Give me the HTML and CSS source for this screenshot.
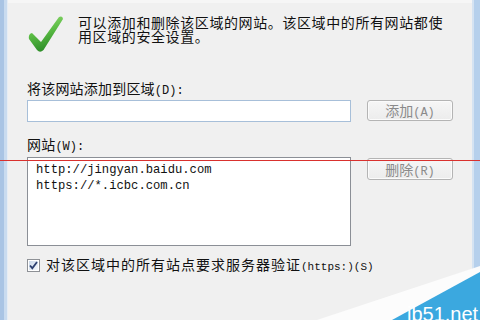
FILE: index.html
```html
<!DOCTYPE html>
<html lang="zh-CN">
<head>
<meta charset="utf-8">
<title>站点</title>
<link rel="stylesheet" href="styles.css">
</head>
<body>
<div class="window">
  <div class="frame frame-left"></div>
  <div class="dialog">
    <div class="intro">
      <svg class="check-icon" viewBox="0 0 36 36" aria-hidden="true">
        <defs>
          <linearGradient id="cg" x1="0" y1="0" x2="0.3" y2="1">
            <stop offset="0" stop-color="#9ade78"/>
            <stop offset="0.5" stop-color="#5cbd45"/>
            <stop offset="1" stop-color="#2f8f2a"/>
          </linearGradient>
        </defs>
        <path d="M4,17 L13,26 L31,1 Q34.5,-0.5 35,3 L15.5,34 Q12,37.5 9,34 L1,23 Q0,18 4,17 Z" fill="url(#cg)"/>
      </svg>
      <p class="intro-text">可以添加和删除该区域的网站。该区域中的所有网站都使<br>用区域的安全设置。</p>
    </div>
    <label class="field-label" for="site">将该网站添加到区域<span class="en">(D):</span></label>
    <div class="row">
      <input class="textbox" id="site" type="text">
      <button class="btn" disabled>添加<span class="en">(A)</span></button>
    </div>
    <div class="field-label list-label">网站<span class="en">(W):</span></div>
    <div class="row list-row">
      <ul class="listbox">
        <li>http://jingyan.baidu.com</li>
        <li>https://*.icbc.com.cn</li>
      </ul>
      <button class="btn btn-remove" disabled>删除<span class="en">(R)</span></button>
    </div>
    <label class="check-row">
      <svg class="checkbox" viewBox="0 0 13 13" aria-hidden="true">
        <defs>
          <linearGradient id="bg" x1="0" y1="0" x2="1" y2="1">
            <stop offset="0" stop-color="#c9d8ea"/>
            <stop offset="1" stop-color="#f4f8fc"/>
          </linearGradient>
        </defs>
        <rect x="0.5" y="0.5" width="12" height="12" fill="#fff" stroke="#8e9196"/>
        <rect x="2" y="2" width="9" height="9" fill="url(#bg)"/>
        <path d="M3,6.5 L5.3,9.2 L10,3" fill="none" stroke="#2b3f70" stroke-width="1.8"/>
      </svg>
      <span>对该区域中的所有站点要求服务器验证<span class="en">(https:)(S)</span></span>
    </label>
  </div>
  <div class="frame frame-right"></div>
  <div class="red-line"></div>
  <div class="watermark">
    <svg class="wm-shape" viewBox="0 0 165 55" aria-hidden="true">
      <polygon points="2,55 165,1 165,55" fill="#fcfcfc"/>
      <polygon points="77,55 165,7 165,55" fill="#3ba8df"/>
    </svg>
    <span class="wm-text">jb51.net</span>
  </div>
</div>
</body>
</html>
```

FILE: styles.css
```css
html, body {
  margin: 0;
  padding: 0;
}

body {
  font-family: "Noto Sans CJK SC", sans-serif;
  color: #111;
}

.window {
  position: relative;
  width: 480px;
  height: 320px;
  display: flex;
  background: #f0f0f0;
  overflow: hidden;
}

.frame {
  flex: none;
  width: 8px;
}

.frame-left {
  background: linear-gradient(to right, #a9c4e4 0 4px, #c9dbef 4px 7px, #e6edf5 7px 8px);
}

.frame-right {
  background: linear-gradient(to right, #d5e3f2 0 2px, #b6d0ec 2px 8px);
}

.dialog {
  flex: 1;
  box-sizing: border-box;
  border-top: 3px solid #f6f6f6;
  padding: 13px 0 0 19px;
}

.intro {
  display: flex;
  height: 36px;
}

.check-icon {
  flex: none;
  width: 36px;
  height: 36px;
  margin-left: 1px;
}

.intro-text {
  margin: -1px 0 0 14px;
  font-size: 14px;
  line-height: 14px;
  letter-spacing: 0.6px;
  white-space: nowrap;
}

.en {
  font-family: "Liberation Mono", monospace;
  font-size: 12px;
  line-height: 1;
  letter-spacing: 0;
}

.field-label {
  display: block;
  height: 17px;
  margin-top: 28px;
  font-size: 14px;
  line-height: 17px;
  letter-spacing: 0.2px;
}

.list-label {
  margin-top: 14px;
}

.row {
  display: flex;
  align-items: flex-start;
  gap: 16px;
  margin-top: 3px;
}

.list-row {
  margin-top: 4px;
}

.textbox {
  width: 324px;
  height: 22px;
  box-sizing: border-box;
  margin: 0;
  padding: 0 3px;
  border: 1px solid #a7bfd9;
  background: #fff;
  outline: none;
}

.btn {
  width: 86px;
  height: 21px;
  box-sizing: border-box;
  margin: 0;
  padding: 0;
  border: 1px solid #b4b4b4;
  border-radius: 3px;
  background: linear-gradient(#f6f6f6, #ececec);
  box-shadow: inset 0 0 0 1px #fbfbfb;
  color: #8a8a8a;
  font-family: "Noto Sans CJK SC", sans-serif;
  font-size: 14px;
  line-height: 19px;
}

.btn-remove {
  margin-top: 1px;
  height: 22px;
  line-height: 20px;
}

.listbox {
  width: 324px;
  height: 89px;
  box-sizing: border-box;
  margin: 0;
  padding: 4px 8px;
  border: 1px solid #8b8f96;
  background: #fff;
  list-style: none;
  font-family: "Liberation Mono", monospace;
  font-size: 12.2px;
  line-height: 16px;
  color: #111;
}

.check-row {
  display: flex;
  align-items: center;
  gap: 6px;
  height: 14px;
  margin-top: 12px;
  font-size: 14px;
  line-height: 14px;
  letter-spacing: 1px;
}

.check-row .en {
  font-size: 11px;
}

.checkbox {
  flex: none;
  width: 13px;
  height: 13px;
}

.red-line {
  position: absolute;
  left: 0;
  right: 0;
  top: 160px;
  height: 1px;
  background: #d9312e;
}

.watermark {
  position: absolute;
  right: 0;
  bottom: 0;
  width: 165px;
  height: 55px;
}

.wm-shape {
  position: absolute;
  inset: 0;
  width: 165px;
  height: 55px;
}

.wm-text {
  position: absolute;
  left: 92px;
  top: 39px;
  font-family: "Liberation Sans", sans-serif;
  font-size: 20px;
  line-height: 20px;
  color: #fff;
  white-space: nowrap;
}
```
